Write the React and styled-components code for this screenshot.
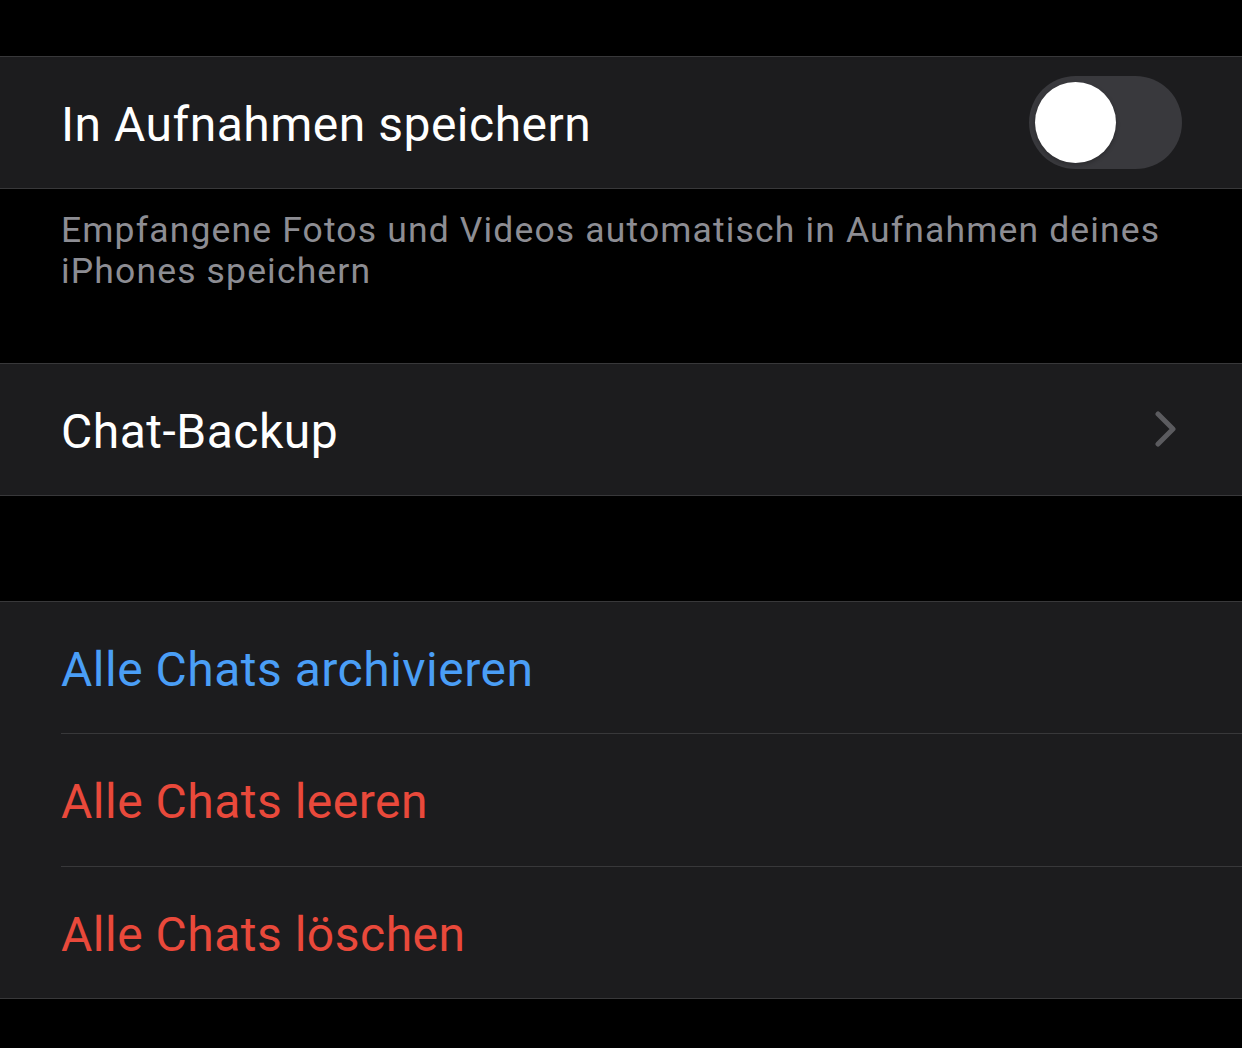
import React from "react";
import styled, { createGlobalStyle } from "styled-components";

const Global = createGlobalStyle`
  html, body { margin: 0; padding: 0; background: #000; }
  body { font-family: Roboto, "Noto Sans", sans-serif; -webkit-font-smoothing: antialiased; }
`;

const Page = styled.div`
  width: 1242px;
  height: 1048px;
  background: #000;
  padding-top: 56px;
  box-sizing: border-box;
  overflow: hidden;
`;

const Group = styled.div`
  background: #1c1c1e;
  border-top: 1px solid #38383a;
  border-bottom: 1px solid #38383a;
`;

const Row = styled.div`
  height: 131px;
  display: flex;
  align-items: center;
  padding-left: 61px;
  box-sizing: content-box;
  & + & {
    border-top: 1px solid #38383a;
    margin-left: 61px;
    padding-left: 0;
    height: 131.5px;
  }
`;

const Label = styled.div`
  flex: 1;
  font-size: 48px;
  font-weight: 400;
  letter-spacing: 0.5px;
  padding-top: 4px;
  color: ${(p) => p.$color || "#ffffff"};
`;

const Track = styled.div`
  width: 153px;
  height: 93px;
  border-radius: 47px;
  background: #39393d;
  margin-right: 60px;
  display: flex;
  align-items: center;
  padding-left: 6px;
  box-sizing: border-box;
`;

const Knob = styled.div`
  width: 81px;
  height: 81px;
  border-radius: 50%;
  background: #fff;
  box-shadow: 0 2px 4px rgba(0, 0, 0, 0.25);
`;

const Chevron = styled.svg`
  width: 22px;
  height: 36px;
  margin-right: 65px;
  margin-top: -2px;
`;

const Footer = styled.div`
  padding: 21px 61px 0 61px;
  height: 174px;
  box-sizing: border-box;
  font-size: 35.5px;
  line-height: 41px;
  letter-spacing: 1.15px;
  color: #8d8d93;
`;

const Spacer = styled.div`
  height: ${(p) => p.$h}px;
`;

export default function App() {
  return (
    <>
      <Global />
      <Page>
        <Group>
          <Row>
            <Label>In Aufnahmen speichern</Label>
            <Track>
              <Knob />
            </Track>
          </Row>
        </Group>
        <Footer>
          Empfangene Fotos und Videos automatisch in Aufnahmen deines iPhones speichern
        </Footer>
        <Group>
          <Row>
            <Label>Chat-Backup</Label>
            <Chevron viewBox="0 0 22 36" fill="none">
              <path
                d="M3 3 L18 18 L3 33"
                stroke="#5b5b5f"
                strokeWidth="5"
                strokeLinecap="round"
                strokeLinejoin="round"
              />
            </Chevron>
          </Row>
        </Group>
        <Spacer $h={105} />
        <Group>
          <Row>
            <Label $color="#4a9ef6">Alle Chats archivieren</Label>
          </Row>
          <Row>
            <Label $color="#e9493b">Alle Chats leeren</Label>
          </Row>
          <Row>
            <Label $color="#e9493b">Alle Chats löschen</Label>
          </Row>
        </Group>
      </Page>
    </>
  );
}
